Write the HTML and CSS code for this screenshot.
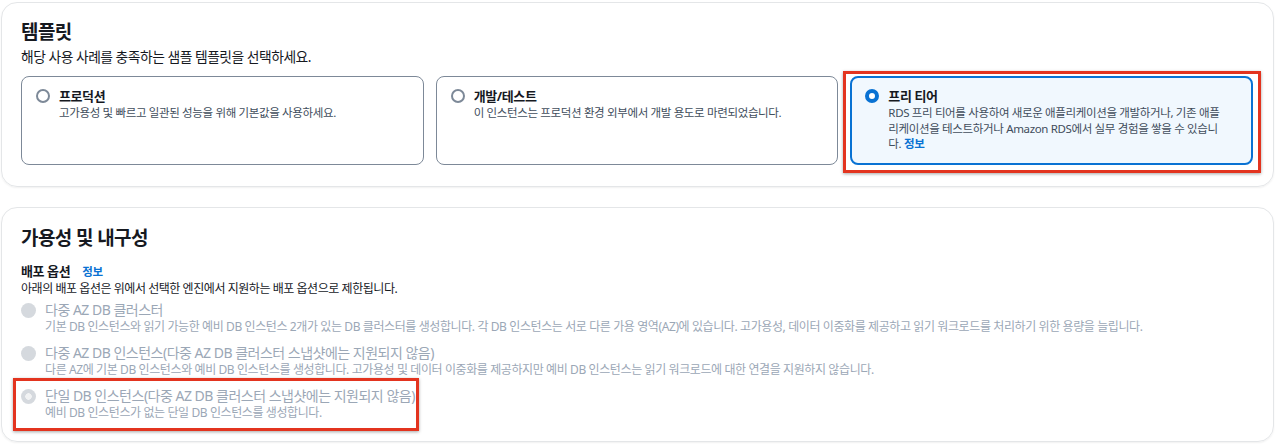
FILE: index.html
```html
<!DOCTYPE html>
<html lang="ko">
<head>
    <meta charset="UTF-8">
    <meta name="viewport" content="width=device-width, initial-scale=1.0">
    <title>템플릿</title>
    <link rel="stylesheet" href="styles.css">
</head>
<body>

<div class="panel panel-template">
    <h2>템플릿</h2>
    <p class="subtitle">해당 사용 사례를 충족하는 샘플 템플릿을 선택하세요.</p>

    <div class="tiles">
        <div class="tile">
            <span class="radio"></span>
            <div>
                <div class="tile-title">프로덕션</div>
                <div class="tile-desc">고가용성 및 빠르고 일관된 성능을 위해 기본값을 사용하세요.</div>
            </div>
        </div>
        <div class="tile">
            <span class="radio"></span>
            <div>
                <div class="tile-title">개발/테스트</div>
                <div class="tile-desc">이 인스턴스는 프로덕션 환경 외부에서 개발 용도로 마련되었습니다.</div>
            </div>
        </div>
        <div class="tile tile-selected">
            <span class="radio radio-checked"></span>
            <div>
                <div class="tile-title">프리 티어</div>
                <div class="tile-desc">RDS 프리 티어를 사용하여 새로운 애플리케이션을 개발하거나, 기존 애플<br>리케이션을 테스트하거나 Amazon RDS에서 실무 경험을 쌓을 수 있습니<br>다. <a href="#" class="info">정보</a></div>
            </div>
            <div class="highlight highlight-tile"></div>
        </div>
    </div>
</div>

<div class="panel panel-availability">
    <h2>가용성 및 내구성</h2>
    <div class="field-label">배포 옵션 <a href="#" class="info">정보</a></div>
    <p class="field-desc">아래의 배포 옵션은 위에서 선택한 엔진에서 지원하는 배포 옵션으로 제한됩니다.</p>

    <div class="option">
        <span class="radio radio-disabled"></span>
        <div>
            <div class="option-title">다중 AZ DB 클러스터</div>
            <div class="option-desc">기본 DB 인스턴스와 읽기 가능한 예비 DB 인스턴스 2개가 있는 DB 클러스터를 생성합니다. 각 DB 인스턴스는 서로 다른 가용 영역(AZ)에 있습니다. 고가용성, 데이터 이중화를 제공하고 읽기 워크로드를 처리하기 위한 용량을 늘립니다.</div>
        </div>
    </div>
    <div class="option">
        <span class="radio radio-disabled"></span>
        <div>
            <div class="option-title">다중 AZ DB 인스턴스(다중 AZ DB 클러스터 스냅샷에는 지원되지 않음)</div>
            <div class="option-desc">다른 AZ에 기본 DB 인스턴스와 예비 DB 인스턴스를 생성합니다. 고가용성 및 데이터 이중화를 제공하지만 예비 DB 인스턴스는 읽기 워크로드에 대한 연결을 지원하지 않습니다.</div>
        </div>
    </div>
    <div class="option">
        <span class="radio radio-disabled radio-disabled-checked"></span>
        <div>
            <div class="option-title">단일 DB 인스턴스(다중 AZ DB 클러스터 스냅샷에는 지원되지 않음)</div>
            <div class="option-desc">예비 DB 인스턴스가 없는 단일 DB 인스턴스를 생성합니다.</div>
        </div>
        <div class="highlight highlight-option"></div>
    </div>
</div>

</body>
</html>
```

FILE: styles.css
```css
body {
    margin: 0;
    padding: 2px 6px 4px 1px;
    font-family: "Noto Sans", "Noto Sans CJK KR", sans-serif;
    color: #16191f;
    background: #fff;
}
.panel {
    border: 1px solid #e4e6e8;
    border-radius: 16px;
    box-shadow: 0 1px 2px rgba(0, 0, 0, 0.06);
    padding: 16px 20px 20px 19px;
}
.panel-template {
    height: 185px;
    box-sizing: border-box;
}
.panel-availability {
    margin-top: 20px;
    height: 235px;
    box-sizing: border-box;
    padding-top: 17px;
}
h2 {
    margin: 0;
    font-size: 19px;
    font-weight: bold;
    letter-spacing: -0.6px;
    line-height: 26px;
}
.subtitle {
    margin: 2px 0 0;
    font-size: 13.8px;
    letter-spacing: -0.5px;
    line-height: 20px;
}
.tiles {
    display: grid;
    grid-template-columns: repeat(3, 1fr);
    gap: 12px;
    margin-top: 9px;
}
.tile {
    position: relative;
    height: 89px;
    box-sizing: border-box;
    border: 1px solid #7d8998;
    border-radius: 8px;
    padding: 10px 14px;
    display: flex;
    gap: 9px;
}
.tile-selected {
    border: 2px solid #0972d3;
    background: #f1f8fe;
    padding: 9px 13px;
}
.tile-title {
    font-size: 13px;
    font-weight: bold;
    letter-spacing: -0.4px;
    line-height: 18px;
}
.tile-desc {
    font-size: 11.5px;
    letter-spacing: -0.35px;
    line-height: 15.5px;
    color: #414d5c;
}
.info {
    color: #0972d3;
    font-weight: bold;
    text-decoration: none;
}
.radio {
    flex: none;
    width: 14px;
    height: 14px;
    margin-top: 2px;
    box-sizing: border-box;
    border: 2px solid #7d8998;
    border-radius: 50%;
    background: #fff;
}
.radio-checked {
    border: 4px solid #0972d3;
}
.radio-disabled {
    width: 15px;
    height: 15px;
    border: none;
    background: #d5d9de;
}
.radio-disabled-checked {
    background: radial-gradient(circle, #f2f3f4 0 3px, #d5d9de 3.5px);
}
.field-label {
    margin-top: 11px;
    font-size: 13px;
    font-weight: bold;
    letter-spacing: -0.4px;
    line-height: 18px;
}
.field-label .info {
    font-size: 11.5px;
    margin-left: 9px;
}
.field-desc {
    margin: 0;
    font-size: 12px;
    letter-spacing: -0.45px;
    line-height: 16px;
}
.option {
    position: relative;
    display: flex;
    gap: 9px;
    margin-top: 3px;
    color: #9ba7b6;
}
.option + .option {
    margin-top: 8px;
}
.option .radio {
    margin-top: 3px;
}
.option-title {
    font-size: 14px;
    letter-spacing: -0.5px;
    line-height: 19px;
}
.option-desc {
    font-size: 12px;
    letter-spacing: -0.4px;
    line-height: 16px;
}
.highlight {
    position: absolute;
    box-sizing: border-box;
    border: 3px solid #e3341f;
    box-shadow: 0 1px 3px rgba(0, 0, 0, 0.35);
    pointer-events: none;
}
.highlight-tile {
    left: -9px;
    top: -7px;
    right: -10px;
    bottom: -10px;
}
.highlight-option {
    left: -8px;
    top: -8px;
    width: 406px;
    bottom: -10px;
}
```
